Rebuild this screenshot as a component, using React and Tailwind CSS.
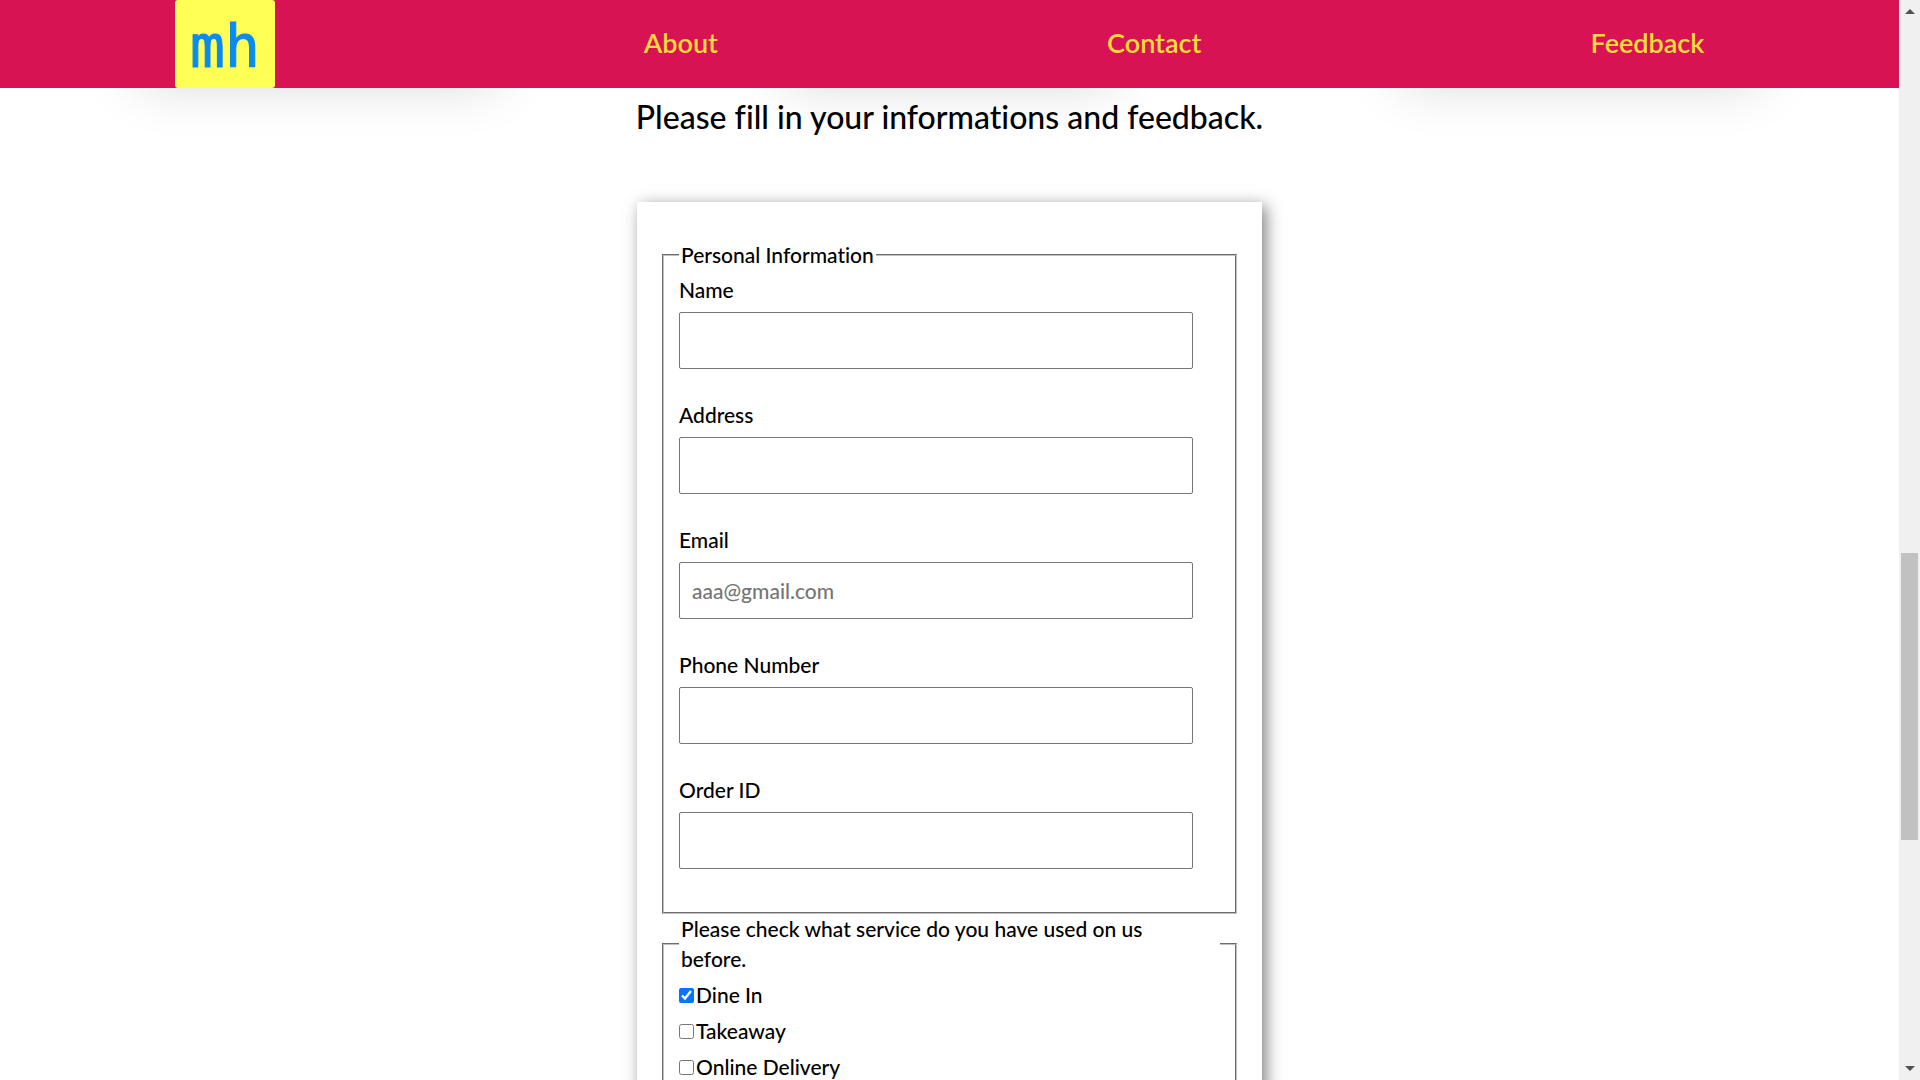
const links = ["About", "Contact", "Feedback"];

const fields = [
  { id: "name", label: "Name", type: "text" },
  { id: "address", label: "Address", type: "text" },
  { id: "email", label: "Email", type: "email", placeholder: "aaa@gmail.com" },
  { id: "phone", label: "Phone Number", type: "tel" },
  { id: "order", label: "Order ID", type: "text" },
];

const services = [
  { id: "dine", label: "Dine In", checked: true },
  { id: "takeaway", label: "Takeaway" },
  { id: "delivery", label: "Online Delivery" },
];

function Header() {
  return (
    <header className="relative z-10 flex h-[88px] shrink-0 items-center justify-around bg-[#d71353]">
      <a href="#home" aria-label="Home" className="-mx-5 block h-[88px] w-[100px] rounded-[3px] bg-[#ffff55]">
        <svg viewBox="0 0 100 88" className="h-full w-full">
          <text
            x="50"
            y="67"
            textAnchor="middle"
            fontSize="58"
            fill="#0a8bee"
            stroke="#0a8bee"
            strokeWidth="1"
            strokeLinejoin="round"
            className="font-['DejaVu_Sans_Mono',monospace]"
          >
            mh
          </text>
        </svg>
      </a>
      {links.map((label) => (
        <a key={label} href={"#" + label.toLowerCase()} className="pb-0.5 text-[27px] font-semibold leading-9 text-[#fddb3a]">
          {label}
        </a>
      ))}
    </header>
  );
}

function CardShadows() {
  return (
    <div className="-mt-[228px] flex h-[200px] shrink-0 justify-between px-32">
      <div className="w-[380px] shadow-[0_30px_60px_-12px_rgba(0,0,0,0.2)]" />
      <div className="w-[350px] shadow-[0_30px_60px_-12px_rgba(0,0,0,0.2)]" />
      <div className="w-[380px] shadow-[0_30px_60px_-12px_rgba(0,0,0,0.2)]" />
    </div>
  );
}

function FeedbackForm() {
  return (
    <form className="mx-auto mt-[63px] w-full max-w-[625px] bg-white px-[25px] pt-[38px] pb-10 shadow-[4px_4px_15px_rgba(0,0,0,0.5)]">
      <fieldset className="border-2 border-[#c0c0c0] px-[15px] pb-[43px] [border-style:groove]">
        <legend className="px-[2px]">Personal Information</legend>
        <div className="flex flex-col gap-[31px] pt-[5px] pr-[27px]">
          {fields.map((f) => (
            <div key={f.id} className="flex flex-col gap-[7px]">
              <label htmlFor={f.id}>{f.label}</label>
              <input
                id={f.id}
                type={f.type}
                placeholder={f.placeholder}
                className="h-[57px] w-full rounded-[2px] border border-[#767676] bg-white px-3 placeholder:text-[#757575]"
              />
            </div>
          ))}
        </div>
      </fieldset>
      <fieldset className="border-2 border-[#c0c0c0] px-[15px] pb-10 [border-style:groove]">
        <legend className="w-full px-[2px]">
          Please check what service do you have used on us
          <br />
          before.
        </legend>
        <div className="flex flex-col gap-[6px] pt-[6px]">
          {services.map((s) => (
            <div key={s.id} className="flex items-center gap-[2px]">
              <input id={s.id} type="checkbox" defaultChecked={s.checked} className="size-[15px] accent-[#0075ff]" />
              <label htmlFor={s.id}>{s.label}</label>
            </div>
          ))}
        </div>
      </fieldset>
    </form>
  );
}

function Scrollbar() {
  return (
    <div className="flex w-[21px] shrink-0 flex-col items-center justify-between bg-[#f0f0f0] py-[9px]" aria-hidden="true">
      <svg viewBox="0 0 10 5" className="h-[5px] w-[10px] fill-[#505050]">
        <path d="M0 5 5 0l5 5z" />
      </svg>
      <div className="flex w-full grow flex-col items-center">
        <div className="grow-[539]" />
        <div className="w-[17px] grow-[287] bg-[#c1c1c1]" />
        <div className="grow-[226]" />
      </div>
      <svg viewBox="0 0 10 5" className="h-[5px] w-[10px] fill-[#505050]">
        <path d="M0 0h10L5 5z" />
      </svg>
    </div>
  );
}

export default function App() {
  return (
    <div className="flex h-screen overflow-hidden bg-white font-['Lato',sans-serif] text-[21px] leading-[30px] font-medium text-black [font-variant-ligatures:none]">
      <div className="flex grow flex-col overflow-hidden">
        <Header />
        <CardShadows />
        <main className="relative mt-7">
          <h1 className="pt-[6px] text-center text-[32px] leading-[45px]">Please fill in your informations and feedback.</h1>
          <FeedbackForm />
        </main>
      </div>
      <Scrollbar />
    </div>
  );
}
